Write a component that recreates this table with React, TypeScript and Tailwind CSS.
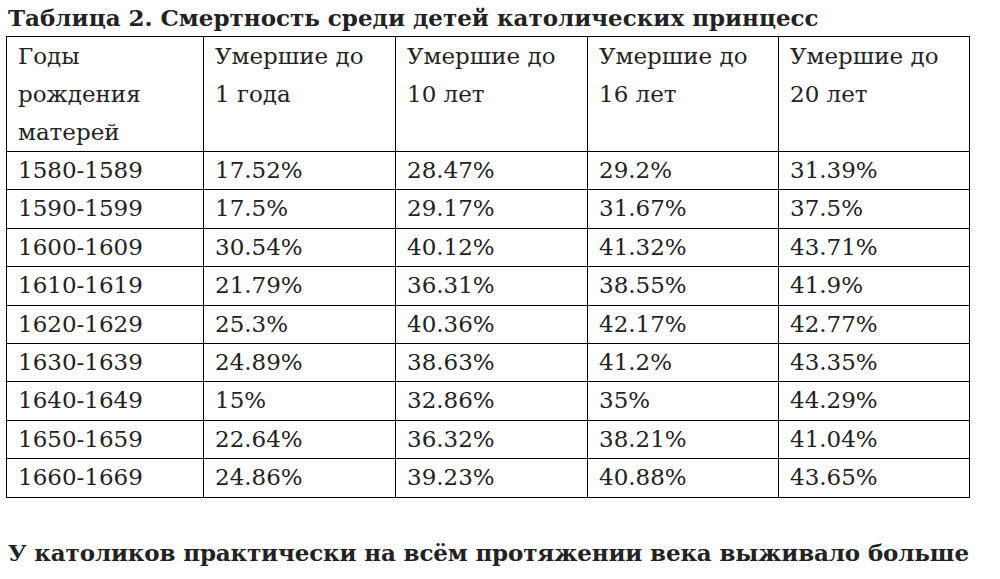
const rows = [
  ['1580-1589', '17.52%', '28.47%', '29.2%', '31.39%'],
  ['1590-1599', '17.5%', '29.17%', '31.67%', '37.5%'],
  ['1600-1609', '30.54%', '40.12%', '41.32%', '43.71%'],
  ['1610-1619', '21.79%', '36.31%', '38.55%', '41.9%'],
  ['1620-1629', '25.3%', '40.36%', '42.17%', '42.77%'],
  ['1630-1639', '24.89%', '38.63%', '41.2%', '43.35%'],
  ['1640-1649', '15%', '32.86%', '35%', '44.29%'],
  ['1650-1659', '22.64%', '36.32%', '38.21%', '41.04%'],
  ['1660-1669', '24.86%', '39.23%', '40.88%', '43.65%'],
]

const header = [
  ['Годы', 'рождения', 'матерей'],
  ['Умершие до', '1 года'],
  ['Умершие до', '10 лет'],
  ['Умершие до', '16 лет'],
  ['Умершие до', '20 лет'],
]

export default function App() {
  const cell = 'border-[1.5px] border-black align-top pl-[11px] pr-1'
  return (
    <div className="w-[1000px] h-[579px] bg-white overflow-hidden text-[#222] font-['DejaVu_Serif',serif]">
      <h2 className="text-[23px] font-bold leading-[28px] pl-[8px] pt-[4px] whitespace-nowrap">
        Таблица 2. Смертность среди детей католических принцесс
      </h2>
      <table className="ml-[6px] mt-[4px] w-[963px] border-collapse table-fixed text-[23px] leading-[38px]">
        <colgroup>
          <col className="w-[197px]" />
          <col className="w-[192px]" />
          <col className="w-[192px]" />
          <col className="w-[191px]" />
          <col className="w-[191px]" />
        </colgroup>
        <thead>
          <tr className="h-[112px]">
            {header.map((h, i) => (
              <th key={i} className={`${cell} font-normal text-left`}>
                {h.map((line, j) => (
                  <div key={j} className="whitespace-nowrap">{line}</div>
                ))}
              </th>
            ))}
          </tr>
        </thead>
        <tbody>
          {rows.map((r, i) => (
            <tr key={i} className="h-[38.4px]">
              {r.map((v, j) => (
                <td key={j} className={`${cell} align-middle leading-[36px]`}>{v}</td>
              ))}
            </tr>
          ))}
        </tbody>
      </table>
      <p className="mt-[41px] pl-[8px] text-[23px] font-bold leading-[28px] tracking-[-0.15px] whitespace-nowrap">
        У католиков практически на всём протяжении века выживало больше
      </p>
    </div>
  )
}
